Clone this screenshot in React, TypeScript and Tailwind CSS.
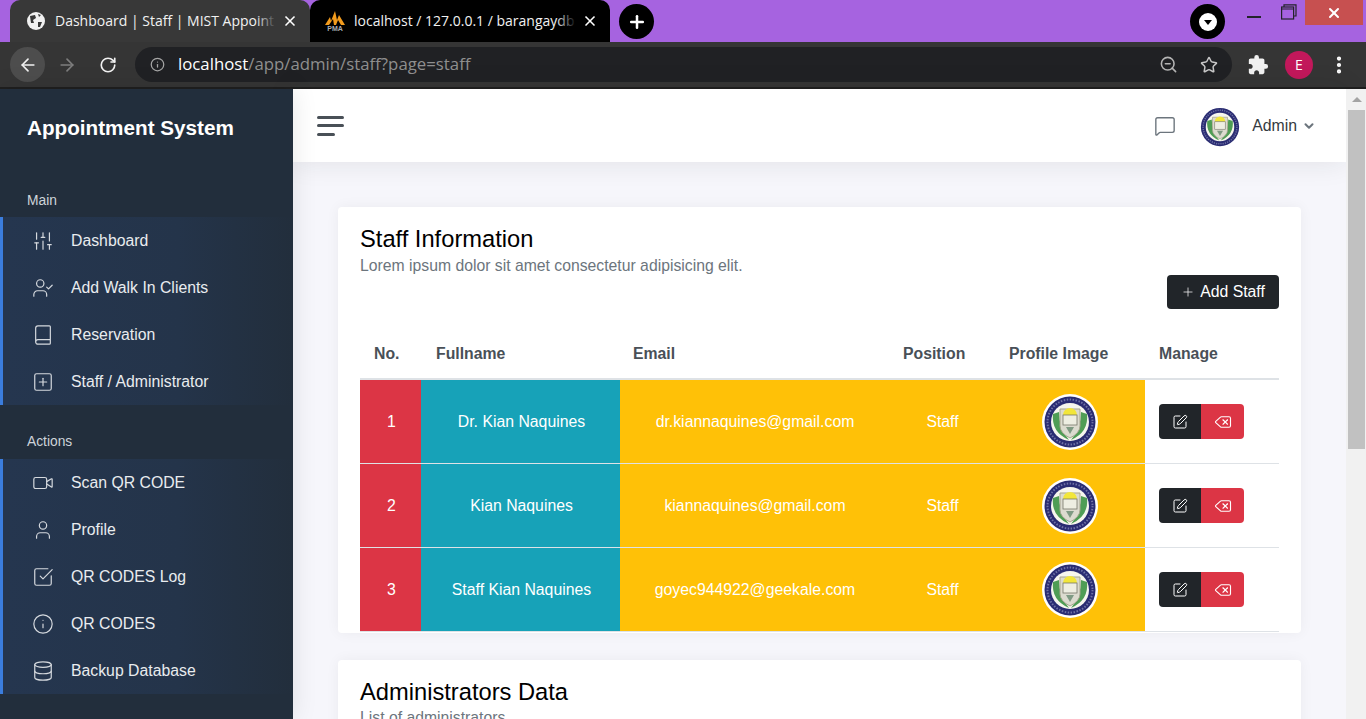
import {
  ArrowLeft,
  ArrowRight,
  Book,
  ChevronDown,
  Database,
  Info,
  MessageSquare,
  Plus,
  RotateCw,
  SlidersVertical,
  SquareCheckBig,
  SquarePen,
  SquarePlus,
  Star,
  User,
  UserCheck,
  Video,
  X,
  Delete,
  ZoomOut,
  EllipsisVertical,
  LucideIcon,
} from "lucide-react";
import { MdExtension } from "react-icons/md";

const SANS = "font-['Liberation_Sans',Arial,sans-serif]";
const UI = "font-['Open_Sans','Noto_Sans',sans-serif]";

const mainNav: [LucideIcon, string][] = [
  [SlidersVertical, "Dashboard"],
  [UserCheck, "Add Walk In Clients"],
  [Book, "Reservation"],
  [SquarePlus, "Staff / Administrator"],
];

const actionNav: [LucideIcon, string][] = [
  [Video, "Scan QR CODE"],
  [User, "Profile"],
  [SquareCheckBig, "QR CODES Log"],
  [Info, "QR CODES"],
  [Database, "Backup Database"],
];

const staff = [
  { no: 1, name: "Dr. Kian Naquines", email: "dr.kiannaquines@gmail.com" },
  { no: 2, name: "Kian Naquines", email: "kiannaquines@gmail.com" },
  { no: 3, name: "Staff Kian Naquines", email: "goyec944922@geekale.com" },
];

// school seal, drawn small so only the rough rings and shield matter
const Seal = ({ size }: { size: number }) => (
  <svg width={size} height={size} viewBox="0 0 56 56" className="block">
    <circle cx="28" cy="28" r="28" fill="#fff" />
    <circle cx="28" cy="28" r="25.5" fill="#2a2c72" />
    <circle cx="28" cy="28" r="22.5" fill="none" stroke="#6f72a6" strokeWidth="2" strokeDasharray="1.5 1.5" />
    <circle cx="28" cy="28" r="19" fill="#f6f6ee" />
    <path d="M11 20 Q9 38 27 46 Q17 34 17 18Z" fill="#4f9d55" />
    <path d="M45 20 Q47 38 29 46 Q39 34 39 18Z" fill="#4f9d55" />
    <path d="M18 15 H38 V32 Q38 39 28 44 Q18 39 18 32Z" fill="#dcdbcf" stroke="#a7a68f" />
    <path d="M21 21 A7 7 0 0 1 35 21Z" fill="#f2e63a" />
    <rect x="21" y="21" width="14" height="10" fill="#eeeee2" stroke="#77776a" strokeWidth="0.8" />
    <path d="M24 33 L28 40 L32 33Z" fill="#7f9a83" />
  </svg>
);

const NavGroup = ({ items }: { items: [LucideIcon, string][] }) => (
  <ul className="border-l-[3px] border-[#3b7ddd] bg-gradient-to-r from-[#25364f] via-[#24344a] via-60% to-[#222e3c]">
    {items.map(([Icon, label]) => (
      <li key={label} className="flex h-[47px] items-center text-[15.8px] text-[#e9ecef]">
        <span className="w-[68px] pl-[29px]">
          <Icon size={22} strokeWidth={1.3} className="text-[#d5d9de]" />
        </span>
        {label}
      </li>
    ))}
  </ul>
);

const Sidebar = () => (
  <aside className="relative z-20 flex w-[293px] shrink-0 flex-col bg-[#222e3c] shadow-[0_0_24px_rgba(0,0,0,0.1)]">
    <div className="pl-[27px] pt-[26px] text-[20.7px] leading-[26px] font-bold text-white">Appointment System</div>
    <div className="pl-[27px] pt-[51px] pb-[8px] text-[13.8px] leading-[17px] text-[#ced4da]">Main</div>
    <NavGroup items={mainNav} />
    <div className="pl-[27px] pt-[28px] pb-[9px] text-[13.8px] leading-[17px] text-[#ced4da]">Actions</div>
    <NavGroup items={actionNav} />
  </aside>
);

const TopBar = () => (
  <header className="relative z-10 flex h-[73px] shrink-0 items-center bg-white pl-[24px] pr-[30px] shadow-[0_0_28px_rgba(33,37,41,0.1)]">
    <div className="flex w-[27px] flex-col gap-[5.5px]">
      <span className="h-[3px] w-[27px] rounded bg-[#495057]" />
      <span className="h-[3px] w-[27px] rounded bg-[#495057]" />
      <span className="h-[3px] w-[18px] rounded bg-[#495057]" />
    </div>
    <MessageSquare size={22} strokeWidth={1.5} className="ml-auto mr-[23px] text-[#6c757d]" />
    <div className="mr-[11px] mt-[3px]">
      <Seal size={42} />
    </div>
    <span className="text-[15.8px] text-[#343a40]">Admin</span>
    <ChevronDown size={14} strokeWidth={3.5} className="ml-[5px] text-[#6c757d]" />
  </header>
);

const StaffTable = () => (
  <table className="w-full table-fixed border-collapse text-[15.8px]">
    <colgroup>
      <col className="w-[61px]" />
      <col className="w-[199px]" />
      <col className="w-[270px]" />
      <col className="w-[105px]" />
      <col className="w-[150px]" />
      <col className="w-[134px]" />
    </colgroup>
    <thead>
      <tr className="h-[53px] border-b-2 border-[#dee2e6] text-left font-bold text-[#495057]">
        <th className="pl-[14px] pt-[3px]">No.</th>
        <th className="pl-[15px] pt-[3px]">Fullname</th>
        <th className="pl-[13px] pt-[3px]">Email</th>
        <th className="pl-[13px] pt-[3px]">Position</th>
        <th className="pl-[14px] pt-[3px]">Profile Image</th>
        <th className="pl-[14px] pt-[3px]">Manage</th>
      </tr>
    </thead>
    <tbody>
      {staff.map((s) => (
        <tr key={s.no} className="h-[84px] border-b border-[#dee2e6] text-center text-white">
          <td className="bg-[#dc3545] pl-[2px] pt-[2px]">{s.no}</td>
          <td className="bg-[#17a2b8] pl-[2px] pt-[2px]">{s.name}</td>
          <td className="bg-[#ffc107] pt-[2px]">{s.email}</td>
          <td className="bg-[#ffc107] pt-[2px]">Staff</td>
          <td className="bg-[#ffc107] pt-[1px]">
            <div className="flex justify-center">
              <Seal size={56} />
            </div>
          </td>
          <td className="pl-[14px] pt-[1px]">
            <div className="flex">
              <button className="flex h-[35px] w-[42px] items-center justify-center rounded-l bg-[#212529] text-white">
                <SquarePen size={16} strokeWidth={1.5} />
              </button>
              <button className="flex h-[35px] w-[43px] items-center justify-center rounded-r bg-[#dc3545] text-white">
                <Delete size={18} strokeWidth={1.5} />
              </button>
            </div>
          </td>
        </tr>
      ))}
    </tbody>
  </table>
);

const Content = () => (
  <main className="flex-1 overflow-hidden bg-[#f6f6fb] px-[45px] pt-[45px] pb-0">
    <section className="h-[426px] overflow-hidden rounded bg-white px-[22px] pt-[18px] shadow-[0_0_.875rem_0_rgba(33,37,41,0.05)]">
      <h2 className="text-[23.7px] leading-[28px] text-black">Staff Information</h2>
      <p className="mt-[4px] text-[15.75px] leading-[18px] text-[#6c757d]">Lorem ipsum dolor sit amet consectetur adipisicing elit.</p>
      <div className="flex justify-end">
        <button className="flex h-[34px] w-[112px] items-center justify-center gap-[5px] rounded bg-[#212529] text-[15.8px] text-white">
          <Plus size={14} strokeWidth={1.25} />
          Add Staff
        </button>
      </div>
      <div className="pt-[17px]">
        <StaffTable />
      </div>
    </section>
    <section className="mt-[27px] h-[200px] rounded bg-white px-[22px] pt-[18px] shadow-[0_0_.875rem_0_rgba(33,37,41,0.05)]">
      <h2 className="text-[23.7px] leading-[28px] text-black">Administrators Data</h2>
      <p className="text-[15.75px] leading-[24px] text-[#6c757d]">List of administrators</p>
    </section>
  </main>
);

const Scrollbar = () => (
  <div className="relative z-20 flex w-[20px] shrink-0 flex-col bg-[#f1f1f1] pl-[2px]">
    <div className="flex h-[21px] w-[17px] items-center justify-center">
      <span className="h-0 w-0 border-x-[5px] border-b-[5px] border-x-transparent border-b-[#a3a3a3]" />
    </div>
    <div className="h-[339px] w-[17px] bg-[#c1c1c1]" />
  </div>
);

const Tab = ({ title, active, icon }: { title: string; active?: boolean; icon: React.ReactNode }) => (
  <div className={`flex h-[42px] w-[300px] items-center rounded-t-[10px] pr-[12px] ${active ? "bg-[#383838] pl-[16px]" : "bg-black pl-[15px]"}`}>
    <span className="mr-[9px] flex w-[20px] justify-center">{icon}</span>
    <span className={`relative flex-1 whitespace-nowrap pb-[2px] text-[14px] text-[#f1f1f1] ${UI}`}>
      {title}
      <span className={`absolute inset-y-0 right-0 w-[20px] bg-gradient-to-r from-transparent ${active ? "to-[#383838]" : "to-black"}`} />
    </span>
    <X size={16} strokeWidth={2.5} className="ml-[6px] text-white" />
  </div>
);

const BrowserChrome = () => (
  <div className="shrink-0">
    <div className="flex h-[42px] items-start bg-[#a663e0] pl-[10px]">
      <Tab
        active
        title="Dashboard | Staff | MIST Appoint"
        icon={
          <svg width="18" height="18" viewBox="0 0 18 18">
            <circle cx="9" cy="9" r="9" fill="#f1f1f1" />
            <path d="M3 4 L8 3 L9 6 L6 8 L7 11 L4 11Z M11 10 L15 10 L13 15 L11 15Z M11 2 L14 3 L12 5Z" fill="#383838" />
          </svg>
        }
      />
      <Tab
        title="localhost / 127.0.0.1 / barangaydb"
        icon={
          <svg width="22" height="20" viewBox="0 0 22 20" className="shrink-0">
            <path d="M1 14 L6 6 L7 10 L11 0 L13 9 L15 4 L21 14Z" fill="#f29b1d" />
            <path d="M5 14 L9 8 L10 14Z M12 14 L14 9 L17 14Z" fill="#000" />
            <text x="11" y="20" textAnchor="middle" fontSize="7" fontWeight="700" fill="#a9aeb5" fontFamily="Liberation Sans">PMA</text>
          </svg>
        }
      />
      <div className="ml-[9px] mt-[4px] flex h-[35px] w-[35px] items-center justify-center rounded-full bg-black">
        <Plus size={20} strokeWidth={3} className="text-white" />
      </div>
      <div className="ml-auto mt-[4px] flex h-[35px] w-[35px] items-center justify-center rounded-full bg-black">
        <div className="flex h-[18px] w-[18px] items-center justify-center rounded-full bg-white">
          <span className="mt-[2px] h-0 w-0 border-x-[4px] border-t-[5px] border-x-transparent border-t-black" />
        </div>
      </div>
      <div className="ml-[22px] flex h-[25px] items-start">
        <span className="mt-[16px] h-[2px] w-[14px] bg-[#23232b]" />
        <svg width="16" height="16" viewBox="0 0 16 16" fill="none" stroke="#23232b" strokeWidth="1.2" className="ml-[20px] mt-[4px]">
          <rect x="0.6" y="3" width="12" height="12" />
          <path d="M0.6 5 H12.6 M3 3 V0.8 H15 V12 H12.6" />
        </svg>
        <div className="ml-[8px] flex h-[25px] w-[58px] items-center justify-center bg-[#c75050]">
          <X size={16} strokeWidth={3} className="text-white" />
        </div>
      </div>
      <div className="w-[3px]" />
    </div>
    <div className="flex h-[45px] items-center bg-[#353535] pl-[10px]">
      <div className="flex h-[35px] w-[35px] items-center justify-center rounded-full bg-[#4d4d4d]">
        <ArrowLeft size={20} strokeWidth={2} className="text-[#f1f1f1]" />
      </div>
      <ArrowRight size={20} strokeWidth={2} className="ml-[12px] text-[#7d7d7d]" />
      <RotateCw size={18} strokeWidth={2.2} className="ml-[22px] text-[#f1f1f1]" />
      <div className={`ml-[18px] flex h-[35px] w-[1097px] items-center rounded-full bg-[#202124] pl-[15px] pr-[14px] text-[16.8px] ${UI}`}>
        <Info size={15} strokeWidth={2} className="mr-[13px] text-[#a5a5a5]" />
        <span className="pb-[2px] text-white">localhost</span>
        <span className="pb-[2px] text-[#8f8f8f]">/app/admin/staff?page=staff</span>
        <ZoomOut size={19} strokeWidth={2} className="ml-auto text-[#b5b5b5]" />
        <Star size={18} strokeWidth={2} className="ml-[22px] text-[#c8c8c8]" />
      </div>
      <MdExtension size={22} className="ml-[15px] text-[#f1f1f1]" />
      <div className={`ml-[16px] flex h-[28px] w-[28px] items-center justify-center rounded-full bg-[#c2185b] text-[14px] text-white ${UI}`}>E</div>
      <EllipsisVertical size={22} strokeWidth={2.6} className="ml-[15px] text-white" />
    </div>
    <div className="h-[2px] bg-[#1f1f1f]" />
  </div>
);

export default function App() {
  return (
    <div className={`flex h-[719px] w-[1366px] flex-col overflow-hidden ${SANS}`}>
      <BrowserChrome />
      <div className="flex min-h-0 flex-1">
        <Sidebar />
        <div className="flex min-w-0 flex-1 flex-col">
          <TopBar />
          <Content />
        </div>
        <Scrollbar />
      </div>
    </div>
  );
}
